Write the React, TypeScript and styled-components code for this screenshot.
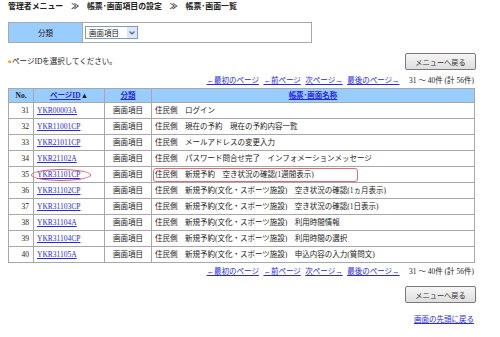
import React from "react";
import styled, { createGlobalStyle } from "styled-components";

const GlobalStyle = createGlobalStyle`
  html, body {
    margin: 0;
    padding: 0;
    background: #fff;
  }
  body {
    font-family: "Liberation Serif", "Noto Sans CJK JP", serif;
    font-size: 7.5px;
    color: #222;
  }
`;

const Page = styled.div`
  width: 467px;
  padding: 2px 0 0 8px;
`;

const Breadcrumb = styled.div`
  font-weight: bold;
  font-size: 7.9px;
  line-height: 10px;
  height: 10px;
  white-space: nowrap;
`;

const FilterTable = styled.div`
  display: flex;
  width: 304px;
  height: 21px;
  margin-top: 10px;
  border: 1px solid #a8a8a8;
  box-sizing: border-box;
`;

const FilterLabel = styled.div`
  width: 73px;
  background: #99ccff;
  border-right: 1px solid #a8a8a8;
  display: flex;
  align-items: center;
  justify-content: center;
`;

const FilterValue = styled.div`
  flex: 1;
  display: flex;
  align-items: center;
  padding-left: 2px;
`;

const FakeSelect = styled.div`
  width: 53px;
  height: 13px;
  box-sizing: border-box;
  border: 1px solid #7f9db9;
  display: flex;
  align-items: center;
  justify-content: space-between;
  padding-left: 3px;
  background: #fff;
`;

const SelectArrow = styled.span`
  width: 10px;
  height: 11px;
  background: #dbe6f8;
  display: flex;
  align-items: center;
  justify-content: center;
  border-left: 1px solid #fff;
`;

const ActionRow = styled.div<{ $top: number }>`
  display: flex;
  align-items: center;
  justify-content: space-between;
  margin-top: ${(p) => p.$top}px;
  height: 17px;
`;

const Note = styled.div`
  line-height: 10px;
  margin-top: 1px;
  &::before {
    content: "■";
    color: #ff9900;
    font-size: 5px;
    margin-right: 1px;
    vertical-align: 1px;
  }
`;

const BackButton = styled.button`
  margin-left: auto;
  width: 71px;
  height: 17px;
  box-sizing: border-box;
  border: 1px solid #7a7a7a;
  border-radius: 2px;
  background: linear-gradient(#f6f6f6, #dedede);
  font-family: "Noto Sans CJK JP", sans-serif;
  font-size: 7.2px;
  color: #333;
  padding: 0;
  margin-right: -1px;
`;

const Pager = styled.div<{ $top: number }>`
  display: flex;
  justify-content: flex-end;
  gap: 4.5px;
  margin-top: ${(p) => p.$top}px;
  line-height: 10px;
  height: 10px;
  white-space: nowrap;
  padding-right: 1px;
`;

const Link = styled.a<{ $bold?: boolean }>`
  color: #2828e0;
  text-decoration: underline;
  font-weight: ${(p) => (p.$bold ? "bold" : "normal")};
  cursor: pointer;
`;

const Count = styled.span`
  margin-left: 5px;
  color: #222;
`;

const Table = styled.table`
  width: 467px;
  border-collapse: collapse;
  margin-top: 2px;
  border: 1px solid #9a9a9a;
  table-layout: fixed;
`;

const Th = styled.th<{ $w?: number }>`
  width: ${(p) => (p.$w ? `${p.$w}px` : "auto")};
  background: #99ccff;
  border: 1px solid #a8a8a8;
  height: 13px;
  padding: 0;
  line-height: 10px;
  font-weight: bold;
  text-align: center;
`;

const Tr = styled.tr`
  height: 16px;
`;

const Td = styled.td<{ $align?: string }>`
  border: 1px solid #a8a8a8;
  padding: 0 ${(p) => (p.$align === "right" ? "4px" : "3px")};
  line-height: 10px;
  text-align: ${(p) => p.$align || "left"};
  white-space: nowrap;
  position: relative;
`;

const Ellipse = styled.span`
  position: absolute;
  left: -3px;
  top: 2px;
  width: 60px;
  height: 12px;
  border: 1px solid #e05a6a;
  border-radius: 50%;
  box-sizing: border-box;
  pointer-events: none;
`;

const Frame = styled.span`
  position: absolute;
  left: 1px;
  top: 1px;
  width: 205px;
  height: 14px;
  border: 1px solid #e46a78;
  border-radius: 3px;
  box-sizing: border-box;
  pointer-events: none;
`;

const TopLink = styled.div`
  display: flex;
  justify-content: flex-end;
  margin-top: 12px;
  line-height: 10px;
  padding-right: 1px;
`;

type Row = { no: number; id: string; name: string; mark?: boolean };

const rows: Row[] = [
  { no: 31, id: "YKR00003A", name: "住民側　ログイン" },
  { no: 32, id: "YKR11001CP", name: "住民側　現在の予約　現在の予約内容一覧" },
  { no: 33, id: "YKR21011CP", name: "住民側　メールアドレスの変更入力" },
  { no: 34, id: "YKR21102A", name: "住民側　パスワード問合せ完了　インフォメーションメッセージ" },
  { no: 35, id: "YKR31101CP", name: "住民側　新規予約　空き状況の確認(1週間表示)", mark: true },
  { no: 36, id: "YKR31102CP", name: "住民側　新規予約(文化・スポーツ施設)　空き状況の確認(1ヵ月表示)" },
  { no: 37, id: "YKR31103CP", name: "住民側　新規予約(文化・スポーツ施設)　空き状況の確認(1日表示)" },
  { no: 38, id: "YKR31104A", name: "住民側　新規予約(文化・スポーツ施設)　利用時間情報" },
  { no: 39, id: "YKR31104CP", name: "住民側　新規予約(文化・スポーツ施設)　利用時間の選択" },
  { no: 40, id: "YKR31105A", name: "住民側　新規予約(文化・スポーツ施設)　申込内容の入力(質問文)" },
];

const Pagination = ({ top }: { top: number }) => (
  <Pager $top={top}>
    <Link>←最初のページ</Link>
    <Link>←前ページ</Link>
    <Link>次ページ→</Link>
    <Link>最後のページ→</Link>
    <Count>31 ～ 40件 (計 56件)</Count>
  </Pager>
);

const App = () => {
  return (
    <Page>
      <GlobalStyle />
      <Breadcrumb>管理者メニュー　≫　帳票･画面項目の設定　≫　帳票･画面一覧</Breadcrumb>

      <FilterTable>
        <FilterLabel>分類</FilterLabel>
        <FilterValue>
          <FakeSelect>
            <span>画面項目</span>
            <SelectArrow>
              <svg width="6" height="4" viewBox="0 0 6 4">
                <path d="M0.5 0.5 L3 3 L5.5 0.5" fill="none" stroke="#4d6185" strokeWidth="1.2" />
              </svg>
            </SelectArrow>
          </FakeSelect>
        </FilterValue>
      </FilterTable>

      <ActionRow $top={10}>
        <Note>ページIDを選択してください。</Note>
        <BackButton>メニューへ戻る</BackButton>
      </ActionRow>

      <Pagination top={6} />

      <Table>
        <thead>
          <tr>
            <Th $w={24}>No.</Th>
            <Th $w={70}>
              <Link $bold>ページID</Link>▲
            </Th>
            <Th $w={46}>
              <Link $bold>分類</Link>
            </Th>
            <Th>
              <Link $bold>帳票･画面名称</Link>
            </Th>
          </tr>
        </thead>
        <tbody>
          {rows.map((r) => (
            <Tr key={r.no}>
              <Td $align="right">{r.no}</Td>
              <Td>
                <Link>{r.id}</Link>
                {r.mark && <Ellipse />}
              </Td>
              <Td $align="center">画面項目</Td>
              <Td>
                {r.name}
                {r.mark && <Frame />}
              </Td>
            </Tr>
          ))}
        </tbody>
      </Table>

      <Pagination top={4} />

      <ActionRow $top={9}>
        <BackButton>メニューへ戻る</BackButton>
      </ActionRow>

      <TopLink>
        <Link>画面の先頭に戻る</Link>
      </TopLink>
    </Page>
  );
};

export default App;
